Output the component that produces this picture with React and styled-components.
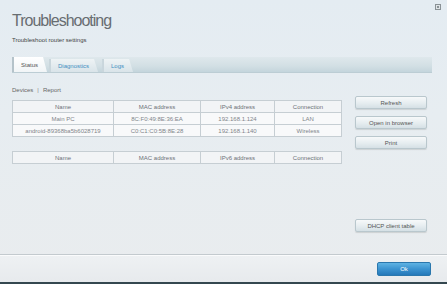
import React from 'react';
import styled, { createGlobalStyle } from 'styled-components';

const GlobalStyle = createGlobalStyle`
    html, body {
        margin: 0;
        padding: 0;
    }
    body {
        font-family: "Liberation Sans", Arial, sans-serif;
        color: #666;
    }
`;

const Page = styled.div`
    width: 447px;
    height: 284px;
    display: flex;
    flex-direction: column;
    background: linear-gradient(180deg, #e4ecf2 0%, #e7edf1 40%, #e9ecee 100%);
    overflow: hidden;
    position: relative;
`;

const Header = styled.header`
    padding: 12px 15px 0 12px;
`;

const Title = styled.h1`
    margin: 0;
    font-size: 16px;
    line-height: 18px;
    font-weight: normal;
    letter-spacing: -1px;
    color: #686d71;
`;

const Subtitle = styled.p`
    margin: 6px 0 0;
    font-size: 6px;
    line-height: 8px;
    color: #444;
`;

const PopoutIcon = styled.svg`
    position: absolute;
    top: 4px;
    right: 6px;
`;

const TabStrip = styled.div`
    margin-top: 13px;
    height: 15px;
    display: flex;
    align-items: flex-end;
    background: linear-gradient(180deg, #dfe8ec 0%, #d2dfe4 60%, #c4d5dc 100%);
    border-bottom: 1px solid #bccdd4;
`;

const Tab = styled.div`
    height: ${p => (p.active ? '15px' : '13px')};
    padding: 0 9px 0 7px;
    margin-right: ${p => (p.active ? '2px' : '4px')};
    display: flex;
    align-items: center;
    font-size: 6px;
    color: ${p => (p.active ? '#555' : '#3f8fc1')};
    background: ${p => (p.active
        ? 'linear-gradient(180deg, #ffffff 0%, #f1f5f7 100%)'
        : 'linear-gradient(180deg, #eef3f5 0%, #d9e4e9 100%)')};
    border-left: 2px solid ${p => (p.active ? '#b5c3ca' : '#c9d6dc')};
    clip-path: polygon(0 0, calc(100% - 4px) 0, 100% 100%, 0 100%);
`;

const Body = styled.main`
    flex: 1;
    display: flex;
    padding: 0 20px 0 12px;
    gap: 14px;
`;

const LeftColumn = styled.section`
    width: 329px;
    display: flex;
    flex-direction: column;
`;

const SubNav = styled.nav`
    margin-top: 13px;
    font-size: 6px;
    line-height: 8px;
    color: #666;
    display: flex;
    gap: 4px;
`;

const Divider = styled.span`
    color: #888;
`;

const Table = styled.table`
    margin-top: ${p => p.offset}px;
    width: 329px;
    border-collapse: collapse;
    table-layout: fixed;
    background: #f8f9fa;
    border: 1px solid #b9c4ca;
`;

const Cell = styled.td`
    height: 11px;
    padding: 0;
    border: 1px solid #c6ced3;
    font-size: 6px;
    text-align: center;
    color: #80858a;
    white-space: nowrap;
    overflow: hidden;
`;

const HeadCell = styled(Cell).attrs({ as: 'th' })`
    font-weight: normal;
    color: #6d7276;
    background: #f2f4f6;
`;

const RightColumn = styled.aside`
    width: 72px;
    display: flex;
    flex-direction: column;
    padding-top: 23px;
    padding-bottom: 22px;
    gap: 7px;
`;

const Button = styled.button`
    height: 13px;
    padding: 0;
    font-family: inherit;
    font-size: 6px;
    color: #555;
    border: 1px solid #b9c7cd;
    border-radius: 2px;
    background: linear-gradient(180deg, #f7f9fa 0%, #e6edf0 55%, #d5e0e5 100%);
    box-shadow: 0 1px 1px rgba(0, 0, 0, 0.12);
`;

const BottomButton = styled(Button)`
    margin-top: auto;
`;

const Footer = styled.footer`
    height: 30px;
    display: flex;
    align-items: flex-start;
    justify-content: flex-end;
    padding: 7px 16px 0 0;
    box-sizing: border-box;
    border-top: 1px solid #c3cace;
    box-shadow: inset 0 1px 0 #fafbfc;
    background: linear-gradient(180deg, #eef1f3 0%, #e7eaed 100%);
    border-bottom: 2px solid #34474f;
`;

const OkButton = styled.button`
    width: 54px;
    height: 14px;
    padding: 0;
    font-family: inherit;
    font-size: 6px;
    color: #fff;
    border: 1px solid #2a77ad;
    border-radius: 2px;
    background: linear-gradient(180deg, #5fb3e3 0%, #3b93d0 50%, #2478b9 100%);
`;

const columns = [
    { key: 'name', width: 101 },
    { key: 'mac', width: 87 },
    { key: 'ip', width: 74 },
    { key: 'conn', width: 67 }
];

const devices = [
    { name: 'Main PC', mac: '8C:F0:49:8E:36:EA', ip: '192.168.1.124', conn: 'LAN' },
    { name: 'android-89368ba5b6028719', mac: 'C0:C1:C0:5B:8E:28', ip: '192.168.1.140', conn: 'Wireless' }
];

const DeviceTable = ({ headers, rows, offset }) => (
    <Table offset={offset}>
        <colgroup>
            {columns.map(c => <col key={c.key} style={{ width: c.width }} />)}
        </colgroup>
        <thead>
            <tr>
                {headers.map(h => <HeadCell key={h}>{h}</HeadCell>)}
            </tr>
        </thead>
        <tbody>
            {rows.map(r => (
                <tr key={r.mac}>
                    {columns.map(c => <Cell key={c.key}>{r[c.key]}</Cell>)}
                </tr>
            ))}
        </tbody>
    </Table>
);

export default function App() {
    return (
        <Page>
            <GlobalStyle />
            <PopoutIcon width="6" height="6" viewBox="0 0 6 6">
                <rect x="0.5" y="0.5" width="5" height="5" fill="#dfe4e7" stroke="#8a9296" strokeWidth="1" />
                <rect x="2" y="2" width="2" height="2" fill="#8a9296" />
            </PopoutIcon>
            <Header>
                <Title>Troubleshooting</Title>
                <Subtitle>Troubleshoot router settings</Subtitle>
                <TabStrip>
                    <Tab active>Status</Tab>
                    <Tab>Diagnostics</Tab>
                    <Tab>Logs</Tab>
                </TabStrip>
            </Header>
            <Body>
                <LeftColumn>
                    <SubNav>
                        <span>Devices</span>
                        <Divider>|</Divider>
                        <span>Report</span>
                    </SubNav>
                    <DeviceTable
                        offset={6}
                        headers={['Name', 'MAC address', 'IPv4 address', 'Connection']}
                        rows={devices}
                    />
                    <DeviceTable
                        offset={14}
                        headers={['Name', 'MAC address', 'IPv6 address', 'Connection']}
                        rows={[]}
                    />
                </LeftColumn>
                <RightColumn>
                    <Button>Refresh</Button>
                    <Button>Open in browser</Button>
                    <Button>Print</Button>
                    <BottomButton>DHCP client table</BottomButton>
                </RightColumn>
            </Body>
            <Footer>
                <OkButton>Ok</OkButton>
            </Footer>
        </Page>
    );
}
